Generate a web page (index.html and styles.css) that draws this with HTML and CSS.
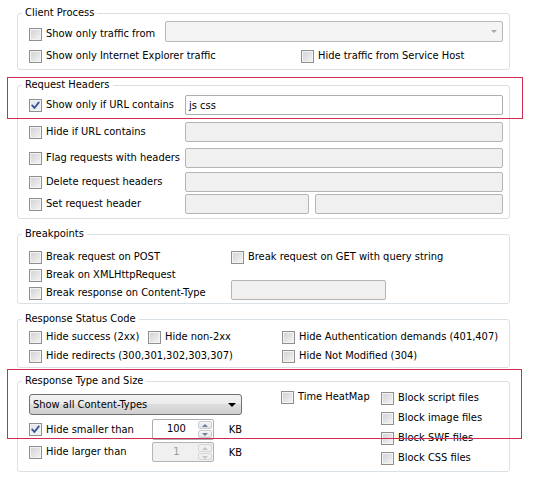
FILE: index.html
```html
<!DOCTYPE html>
<html>
<head>
<meta charset="utf-8">
<link rel="stylesheet" href="styles.css">
</head>
<body>
<div class="page">
  <fieldset class="group g1">
    <legend>Client Process</legend>
    <div class="body">
      <div class="row c-r1">
        <label class="cb w136 drop6"><span class="box"></span>Show only traffic from</label>
        <div class="combo"><span class="carrow"></span></div>
      </div>
      <div class="row c-r2">
        <label class="cb w272"><span class="box"></span>Show only Internet Explorer traffic</label>
        <label class="cb"><span class="box"></span>Hide traffic from Service Host</label>
      </div>
    </div>
  </fieldset>

  <fieldset class="group g2">
    <legend>Request Headers</legend>
    <div class="body">
      <div class="row field h-r1">
        <label class="cb w156"><span class="box checked"><svg viewBox="0 0 13 13" width="13" height="13"><path d="M3.2 6.4 L5.4 9 L9.8 3.4" fill="none" stroke="#3d5795" stroke-width="1.9" stroke-linecap="round" stroke-linejoin="round"/></svg></span>Show only if URL contains</label>
        <div class="input">js css</div>
      </div>
      <div class="row field h-r2">
        <label class="cb w156"><span class="box"></span>Hide if URL contains</label>
        <div class="input disabled"></div>
      </div>
      <div class="row field h-r3">
        <label class="cb w156"><span class="box"></span>Flag requests with headers</label>
        <div class="input disabled"></div>
      </div>
      <div class="row field h-r4">
        <label class="cb w156"><span class="box"></span>Delete request headers</label>
        <div class="input disabled"></div>
      </div>
      <div class="row field h-r5">
        <label class="cb w156"><span class="box"></span>Set request header</label>
        <div class="input disabled half"></div>
        <div class="input disabled"></div>
      </div>
    </div>
  </fieldset>

  <fieldset class="group g3">
    <legend>Breakpoints</legend>
    <div class="body">
      <div class="row line b-r1">
        <label class="cb w202"><span class="box"></span>Break request on POST</label>
        <label class="cb"><span class="box"></span>Break request on GET with query string</label>
      </div>
      <div class="row line">
        <label class="cb"><span class="box"></span>Break on XMLHttpRequest</label>
      </div>
      <div class="row b-r3">
        <label class="cb w202 endalign"><span class="box"></span>Break response on Content-Type</label>
        <div class="input disabled ctype"></div>
      </div>
    </div>
  </fieldset>

  <fieldset class="group g4">
    <legend>Response Status Code</legend>
    <div class="body">
      <div class="row line s-r1">
        <label class="cb w119"><span class="box"></span>Hide success (2xx)</label>
        <label class="cb w134"><span class="box"></span>Hide non-2xx</label>
        <label class="cb"><span class="box"></span>Hide Authentication demands (401,407)</label>
      </div>
      <div class="row line s-r2">
        <label class="cb w253"><span class="box"></span>Hide redirects (300,301,302,303,307)</label>
        <label class="cb"><span class="box"></span>Hide Not Modified (304)</label>
      </div>
    </div>
  </fieldset>

  <fieldset class="group g5">
    <legend>Response Type and Size</legend>
    <div class="body cols">
      <div class="col-left">
        <div class="dropdown"><span>Show all Content-Types</span><span class="darrow"></span></div>
        <div class="row spin-row sz-r1">
          <label class="cb w123"><span class="box checked"><svg viewBox="0 0 13 13" width="13" height="13"><path d="M3.2 6.4 L5.4 9 L9.8 3.4" fill="none" stroke="#3d5795" stroke-width="1.9" stroke-linecap="round" stroke-linejoin="round"/></svg></span>Hide smaller than</label>
          <div class="spin"><span class="val">100</span><span class="btns"><span class="sb up"></span><span class="sb dn"></span></span></div>
          <span class="kb">KB</span>
        </div>
        <div class="row spin-row sz-r2">
          <label class="cb w123"><span class="box"></span>Hide larger than</label>
          <div class="spin disabled"><span class="val">1</span><span class="btns"><span class="sb up"></span><span class="sb dn"></span></span></div>
          <span class="kb">KB</span>
        </div>
      </div>
      <div class="col-mid">
        <label class="cb line"><span class="box"></span>Time HeatMap</label>
      </div>
      <div class="col-right">
        <label class="cb line2"><span class="box"></span>Block script files</label>
        <label class="cb line2"><span class="box"></span>Block image files</label>
        <label class="cb line2"><span class="box"></span>Block SWF files</label>
        <label class="cb line2"><span class="box"></span>Block CSS files</label>
      </div>
    </div>
  </fieldset>

  <div class="mark m1"></div>
  <div class="mark m2"></div>
</div>
</body>
</html>
```

FILE: styles.css
```css
* { box-sizing: border-box; }
html, body { margin: 0; padding: 0; background: #fff; }
body {
  font-family: "DejaVu Sans Condensed", "DejaVu Sans", sans-serif;
  font-size: 11px;
  color: #000;
}
.page {
  position: relative;
  width: 551px;
  height: 480px;
  padding: 6px 0 0 17px;
  overflow: hidden;
}
.group {
  width: 493px;
  margin: 0;
  border: 1px solid #d9e1e6;
  border-radius: 3px;
  padding: 0 6px 0 4px;
  min-width: 0;
}
.group legend {
  padding: 0 3px;
  line-height: 14px;
  height: 14px;
}
.g2 { margin-top: 8px; }
.g3 { margin-top: 8px; }
.g4 { margin-top: 8px; }
.g5 { margin-top: 6px; }

.body { padding-left: 7px; }
.g1 .body { padding-bottom: 6px; }
.g2 .body { padding-bottom: 4px; }
.g3 .body { padding-bottom: 3px; }
.g4 .body { padding-bottom: 2px; }
.g5 .body { padding-bottom: 3px; }

.row { display: flex; align-items: center; }
.line { height: 18px; }
.line2 { height: 20px; }

.cb {
  display: flex;
  align-items: center;
  white-space: nowrap;
  line-height: 14px;
  flex-shrink: 0;
}
.box {
  width: 13px;
  height: 13px;
  margin-right: 4px;
  border: 1px solid #8f8f8f;
  background: linear-gradient(135deg, #cfd1d4 0%, #e4e4e4 55%, #f6f6f6 100%);
  box-shadow: inset 0 0 0 1px #f3f3f3;
  flex-shrink: 0;
  position: relative;
}
.box.checked {
  background: linear-gradient(135deg, #dfe3ea 0%, #f3f4f6 100%);
}
.box svg { position: absolute; left: -1px; top: -1px; }

.w119 { width: 119px; }
.w123 { width: 123px; }
.w134 { width: 134px; }
.w136 { width: 136px; }
.w156 { width: 156px; }
.w202 { width: 202px; }
.w253 { width: 253px; }
.w272 { width: 272px; }

/* client process */
.c-r1 { margin-top: 1px; align-items: flex-start; }
.drop6 { margin-top: 6px; }
.c-r2 { margin-top: 7px; height: 14px; }
.combo {
  flex: 1;
  height: 21px;
  border: 1px solid #b8b8b8;
  border-radius: 2px;
  background: #f4f4f4;
  position: relative;
}
.carrow {
  position: absolute;
  right: 5px;
  top: 8px;
  width: 0;
  height: 0;
  border-left: 3px solid transparent;
  border-right: 3px solid transparent;
  border-top: 3px solid #a8a8a8;
}

/* inputs */
.input {
  flex: 1;
  height: 20px;
  border: 1px solid #abadb3;
  border-radius: 2px;
  background: #fff;
  padding: 2px 3px 0;
  line-height: 15px;
  color: #000;
}
.input.disabled {
  background: #f0f0f0;
  border-color: #b4b4b4;
}
.input.half { flex: 0 0 124px; margin-right: 6px; }
.h-r1 { margin-top: 3px; }
.h-r2 { margin-top: 7px; }
.h-r3 { margin-top: 6px; }
.h-r4 { margin-top: 4px; }
.h-r5 { margin-top: 2px; }

/* breakpoints */
.b-r1 { margin-top: 7px; }
.b-r3 { margin-top: -4px; height: 20px; align-items: flex-end; }
.endalign { align-self: flex-end; }
.ctype { flex: 0 0 155px; }

/* status */
.s-r1 { margin-top: 2px; }
.s-r2 { margin-top: 1px; }

/* type and size */
.cols { display: flex; align-items: flex-start; }
.col-left { width: 213px; }
.col-mid { width: 100px; margin-left: 39px; }
.col-right { display: flex; flex-direction: column; }
.dropdown {
  margin-top: 6px;
  height: 21px;
  border: 1px solid #707070;
  border-radius: 3px;
  background: linear-gradient(#f2f2f2 0%, #ebebeb 50%, #dddddd 50%, #cfcfcf 100%);
  display: flex;
  align-items: center;
  justify-content: space-between;
  padding: 0 5px 0 3px;
  color: #000;
}
.darrow {
  width: 0;
  height: 0;
  border-left: 4px solid transparent;
  border-right: 4px solid transparent;
  border-top: 4px solid #000;
  margin-right: 0;
}
.sz-r1 { margin-top: 4px; height: 21px; }
.sz-r2 { margin-top: 2px; height: 20px; }
.spin {
  width: 63px;
  height: 100%;
  border: 1px solid #abadb3;
  border-radius: 2px;
  background: #fff;
  display: flex;
  color: #000;
}
.spin .val {
  flex: 1;
  text-align: center;
  line-height: 18px;
  padding-left: 2px;
}
.spin.disabled { background: #f0f0f0; border-color: #b4b4b4; color: #9a9a9a; }
.btns {
  width: 15px;
  display: flex;
  flex-direction: column;
  padding: 1px 1px 1px 0;
  gap: 1px;
}
.sb {
  flex: 1;
  border: 1px solid #c8ccd2;
  border-radius: 2px;
  background: linear-gradient(#f6f6f6, #e2e4e8);
  position: relative;
}
.sb::after {
  content: "";
  position: absolute;
  left: 3px;
  top: 2px;
  width: 0;
  height: 0;
  border-left: 3px solid transparent;
  border-right: 3px solid transparent;
}
.sb.up::after { border-bottom: 3px solid #6f7f98; }
.sb.dn::after { border-top: 3px solid #6f7f98; }
.spin.disabled .sb { border-color: #d6d6d6; background: #f0f0f0; }
.spin.disabled .sb.up::after { border-bottom-color: #c4c4c4; }
.spin.disabled .sb.dn::after { border-top-color: #c4c4c4; }
.kb { margin-left: 15px; color: #000; }

/* annotation marks */
.mark {
  position: absolute;
  border: 1px solid #d12a4e;
}
.m1 { left: 7px; top: 77px; width: 516px; height: 42px; }
.m2 { left: 7px; top: 369px; width: 515px; height: 70px; }
```
